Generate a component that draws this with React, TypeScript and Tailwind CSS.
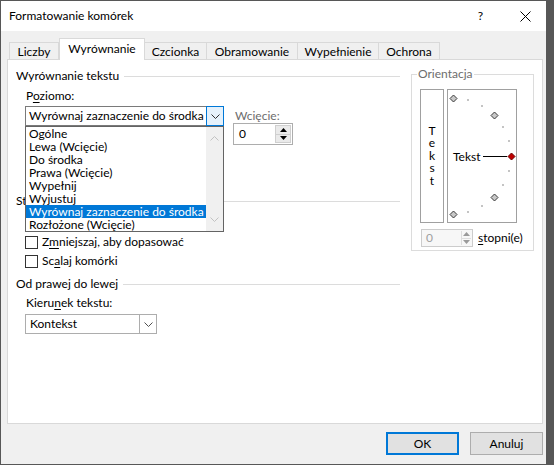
import React from "react";

function Chevron({ up = false, color = "#404040" }: { up?: boolean; color?: string }) {
  return (
    <svg width="9" height="5" viewBox="0 0 9 5" className="block">
      <path
        d={up ? "M0.5 4.5 L4.5 0.5 L8.5 4.5" : "M0.5 0.5 L4.5 4.5 L8.5 0.5"}
        stroke={color}
        strokeWidth="1"
        fill="none"
      />
    </svg>
  );
}

function Tri({ up, color = "#000" }: { up: boolean; color?: string }) {
  return (
    <svg width="7" height="4" viewBox="0 0 7 4" className="block">
      <path d={up ? "M0 4 L3.5 0 L7 4 Z" : "M0 0 L3.5 4 L7 0 Z"} fill={color} />
    </svg>
  );
}

function Header({ label, className }: { label: React.ReactNode; className: string }) {
  return (
    <div className={"flex items-center h-[16px] " + className}>
      <span className="whitespace-nowrap">{label}</span>
      <div className="flex-1 h-px bg-[#dcdcdc] ml-[5px]" />
    </div>
  );
}

function Check({ children, className }: { children: React.ReactNode; className: string }) {
  return (
    <div className={"flex items-center h-[14px] ml-[9px] " + className}>
      <div className="w-[13px] h-[13px] border border-[#333333] bg-white shrink-0" />
      <span className="ml-[4px] whitespace-nowrap">{children}</span>
    </div>
  );
}

function Dial() {
  const cx = 5;
  const cy = 66;
  const r = 58;
  const diamonds = [90, 45, -45, -90];
  const dots = [75, 60, 30, 15, -15, -30, -60, -75];
  const pt = (a: number) => {
    const rad = (a * Math.PI) / 180;
    return [cx + r * Math.cos(rad), cy - r * Math.sin(rad)];
  };
  const dia = (x: number, y: number) =>
    `${x},${y - 3.5} ${x + 3.5},${y} ${x},${y + 3.5} ${x - 3.5},${y}`;
  return (
    <svg width="68" height="132" viewBox="0 0 68 132" className="block">
      {dots.map((a) => {
        const [x, y] = pt(a);
        return <rect key={a} x={Math.round(x) - 1} y={Math.round(y) - 1} width="2" height="2" fill="#c4c4c4" />;
      })}
      {diamonds.map((a) => {
        const [x, y] = pt(a);
        return (
          <polygon
            key={a}
            points={dia(Math.round(x) + 0.5, Math.round(y) + 0.5)}
            fill="#c8c8c8"
            stroke="#3a3a3a"
            strokeWidth="1"
          />
        );
      })}
      <text x="5" y="70.5" fontSize="12" fill="#000">
        Tekst
      </text>
      <line x1="35" y1="66.5" x2="59" y2="66.5" stroke="#000" strokeWidth="1" />
      <polygon points={dia(63.5, 66.5)} fill="#c00000" stroke="#6a0000" strokeWidth="1" />
    </svg>
  );
}

const listItems = [
  "Ogólne",
  "Lewa (Wcięcie)",
  "Do środka",
  "Prawa (Wcięcie)",
  "Wypełnij",
  "Wyjustuj",
  "Wyrównaj zaznaczenie do środka",
  "Rozłożone (Wcięcie)",
];

export default function App() {
  return (
    <div className="w-[554px] h-[465px] bg-[#575757] pt-px pl-px font-[family-name:Lato,'Noto_Sans',sans-serif] text-[12px] leading-[14px] text-black">
      <div className="w-[545px] h-[463px] bg-[#f0f0f0] flex flex-col">
        {/* Title bar */}
        <div className="h-[30px] bg-white flex items-center shrink-0">
          <span className="ml-[8px]">Formatowanie komórek</span>
          <span className="ml-auto">?</span>
          <svg width="11" height="11" viewBox="0 0 11 11" className="ml-[37px] mr-[15px] block">
            <path d="M0.5 0.5 L10.5 10.5 M10.5 0.5 L0.5 10.5" stroke="#000" strokeWidth="1" />
          </svg>
        </div>

        {/* Tabs */}
        <div className="h-[28px] flex items-end pl-[8px] shrink-0 relative z-10">
          <div className="w-[50px] h-[17px] border-t border-l border-r border-[#d9d9d9] flex items-center justify-center pt-px">
            Liczby
          </div>
          <div className="w-[86px] h-[22px] -mb-px bg-white border-t border-l border-r border-[#d9d9d9] flex items-center justify-center pb-[2px]">
            Wyrównanie
          </div>
          <div className="w-[62px] h-[17px] border-t border-r border-[#d9d9d9] flex items-center justify-center pt-px">
            Czcionka
          </div>
          <div className="w-[91px] h-[17px] border-t border-r border-[#d9d9d9] flex items-center justify-center pt-px">
            Obramowanie
          </div>
          <div className="w-[81px] h-[17px] border-t border-r border-[#d9d9d9] flex items-center justify-center pt-px">
            Wypełnienie
          </div>
          <div className="w-[61px] h-[17px] border-t border-r border-[#d9d9d9] flex items-center justify-center pt-px">
            Ochrona
          </div>
        </div>

        {/* Panel */}
        <div className="ml-[6px] w-[536px] h-[365px] bg-white border border-[#d9d9d9] relative flex pl-[8px] shrink-0">
          {/* Left column */}
          <div className="w-[384px] flex flex-col">
            <Header label="Wyrównanie tekstu" className="mt-[8px]" />
            <div className="mt-[4px] h-[16px] flex items-center pl-[10px]">
              <span>
                P<span className="underline underline-offset-2">o</span>ziomo:
              </span>
            </div>
            <div className="mt-[2px] flex items-start">
              <div className="ml-[9px] w-[199px] h-[20px] border border-[#7a7a7a] flex items-stretch">
                <div className="flex-1 flex items-center pl-[3px] whitespace-nowrap">Wyrównaj zaznaczenie do środka</div>
                <div className="w-[18px] -my-px -mr-px border border-[#0078d7] bg-[#e5f1fb] flex items-center justify-center">
                  <Chevron color="#303030" />
                </div>
              </div>
              <div className="ml-[9px] flex flex-col">
                <div className="mt-[3px] h-[14px] pl-[2px] text-[#6d6d6d] flex items-center">Wcięcie:</div>
                <div className="w-[60px] h-[22px] border border-[#adadad] bg-white flex items-center">
                  <span className="pl-[5px] flex-1">0</span>
                  <div className="w-[16px] h-[18px] mr-px flex flex-col border border-[#cfcfcf]">
                    <div className="flex-1 bg-[#eaeaea] flex items-center justify-center border-b border-[#cfcfcf]">
                      <Tri up />
                    </div>
                    <div className="flex-1 bg-[#eaeaea] flex items-center justify-center">
                      <Tri up={false} />
                    </div>
                  </div>
                </div>
              </div>
            </div>
            {/* Sterowanie tekstem header, mostly hidden behind the open list */}
            <div className="mt-[48px] flex items-center justify-between h-[16px]">
              <span className="whitespace-nowrap">St</span>
              <div className="w-[176px] h-px bg-[#dcdcdc]" />
            </div>
            <div className="mt-[7px] h-[14px]" />
            <Check className="mt-[5px]">
              Z<span className="underline underline-offset-2">m</span>niejszaj, aby dopasować
            </Check>
            <Check className="mt-[5px]">
              Sc<span className="underline underline-offset-2">a</span>laj komórki
            </Check>
            <Header label="Od prawej do lewej" className="mt-[8px]" />
            <div className="mt-[3px] h-[16px] flex items-center pl-[10px]">
              <span>
                Kieru<span className="underline underline-offset-2">n</span>ek tekstu:
              </span>
            </div>
            <div className="mt-[3px] ml-[9px] w-[132px] h-[20px] border border-[#adadad] flex items-stretch">
              <div className="flex-1 flex items-center pl-[4px]">Kontekst</div>
              <div className="w-[17px] border-l border-[#adadad] flex items-center justify-center">
                <Chevron color="#505050" />
              </div>
            </div>
          </div>

          {/* Orientation group */}
          <div className="ml-[11px] mt-[14px] w-[123px] h-[177px] border border-[#dcdcdc] relative flex flex-col pt-[14px] pl-[8px]">
            <span className="absolute left-[5px] top-[-8px] bg-white px-px text-[#6d6d6d]">Orientacja</span>
            <div className="flex">
              <div className="w-[24px] h-[134px] border border-[#a0a0a0] flex items-center justify-center">
                <span className="w-[8px] break-all text-center leading-[12.5px]">Tekst</span>
              </div>
              <div className="ml-[3px] w-[70px] h-[134px] border border-[#a0a0a0]">
                <Dial />
              </div>
            </div>
            <div className="mt-[6px] flex items-center h-[18px]">
              <div className="ml-px w-[52px] h-[18px] border border-[#cccccc] bg-[#f7f7f7] flex items-center">
                <span className="pl-[4px] flex-1 text-[#a0a0a0]">0</span>
                <div className="w-[10px] h-[14px] mr-px flex flex-col border-l border-[#dddddd]">
                  <div className="flex-1 flex items-center justify-center border-b border-[#dddddd]">
                    <Tri up color="#9a9a9a" />
                  </div>
                  <div className="flex-1 flex items-center justify-center">
                    <Tri up={false} color="#9a9a9a" />
                  </div>
                </div>
              </div>
              <span className="ml-[5px]">
                <span className="underline underline-offset-2">s</span>topni(e)
              </span>
            </div>
          </div>

          {/* Dropdown list overlay */}
          <div className="absolute left-[17px] top-[66px] w-[199px] h-[106px] border border-[#646464] bg-white flex z-20">
            <div className="w-[180px] flex flex-col">
              {listItems.map((t, i) => (
                <div
                  key={t}
                  className={
                    i === 6
                      ? "h-[13px] leading-[13px] pl-[3px] bg-[#0078d7] text-white whitespace-nowrap"
                      : "h-[13px] leading-[13px] pl-[3px] whitespace-nowrap"
                  }
                >
                  {t}
                </div>
              ))}
            </div>
            <div className="w-[17px] bg-[#f0f0f0] flex flex-col items-center justify-between py-[9px]">
              <Chevron up color="#c2c2c2" />
              <Chevron color="#c2c2c2" />
            </div>
          </div>
        </div>

        {/* Buttons */}
        <div className="flex justify-end gap-[11px] pt-[8px] pr-[3px]">
          <div className="w-[73px] h-[23px] border-2 border-[#0078d7] bg-[#e1e1e1] flex items-center justify-center">OK</div>
          <div className="w-[73px] h-[23px] border border-[#adadad] bg-[#e1e1e1] flex items-center justify-center">Anuluj</div>
        </div>
      </div>
    </div>
  );
}
